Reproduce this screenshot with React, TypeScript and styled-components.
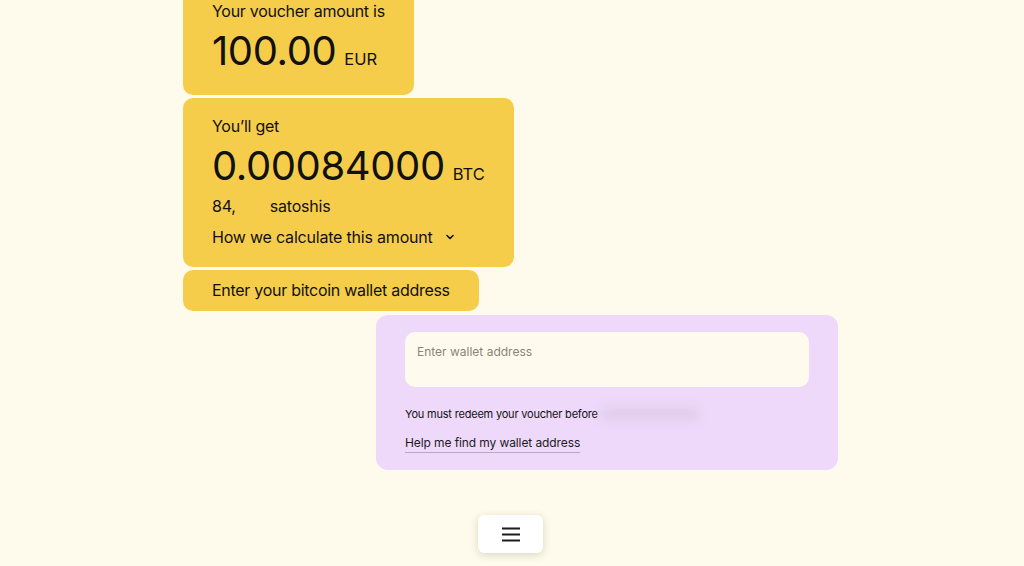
import React from "react";
import styled, { createGlobalStyle } from "styled-components";

const Global = createGlobalStyle`
  html, body {
    margin: 0;
    padding: 0;
    background: #fefbec;
    height: 100%;
    overflow: hidden;
  }
  body {
    font-family: Inter, "Noto Sans", Arial, sans-serif;
    color: #111;
  }
`;

const Page = styled.div`
  height: 566px;
  overflow: hidden;
  background: #fefbec;
`;

const Column = styled.div`
  width: 655px;
  margin-left: calc(50% - 329px);
  margin-top: -17px;
  display: flex;
  flex-direction: column;
  gap: 3px;
`;

const Bubble = styled.div<{ $pb?: number; $pt?: number }>`
  align-self: flex-start;
  background: #f6cd4b;
  border-radius: 10px;
  padding: ${(p) => p.$pt ?? 16}px 29px ${(p) => p.$pb ?? 18}px;
  display: flex;
  flex-direction: column;
`;

const Label = styled.div`
  font-size: 16px;
  line-height: 24px;
  letter-spacing: -0.28px;
`;

const AmountRow = styled.div`
  display: flex;
  align-items: baseline;
  gap: 8px;
  margin-top: 4px;
  height: 48px;
`;

const Amount = styled.span`
  font-size: 40px;
  line-height: 48px;
  letter-spacing: -0.4px;
`;

const Currency = styled.span`
  font-size: 16.5px;
  line-height: 16px;
`;

const Sub = styled.div<{ $mt?: number }>`
  font-size: 16px;
  line-height: 24px;
  margin-top: ${(p) => p.$mt ?? 0}px;
  letter-spacing: -0.2px;
  display: flex;
  align-items: center;
`;

const Hidden = styled.span`
  display: inline-block;
  width: 34px;
`;

const Chevron = styled.svg`
  margin-left: 11px;
  width: 12px;
  height: 12px;
`;

const Panel = styled.div`
  align-self: flex-end;
  margin-top: 1px;
  width: 462px;
  box-sizing: border-box;
  background: #eed9fb;
  border-radius: 12px;
  padding: 17px 29px 17px;
  display: flex;
  flex-direction: column;
`;

const Input = styled.div`
  height: 55px;
  background: #fefbee;
  border-radius: 10px;
  padding: 12px 12px 0;
  box-sizing: border-box;
  font-size: 12px;
  line-height: 16px;
  color: #8a8677;
`;

const Note = styled.div`
  margin-top: 19px;
  font-size: 11px;
  line-height: 16px;
  color: #111;
  display: flex;
  align-items: center;
  letter-spacing: -0.2px;
`;

const Blur = styled.span`
  display: inline-block;
  margin-left: 3px;
  width: 98px;
  height: 14px;
  background: rgba(215, 198, 222, 0.55);
  filter: blur(5px);
`;

const HelpLink = styled.a`
  align-self: flex-start;
  margin-top: 12px;
  font-size: 12px;
  line-height: 18px;
  letter-spacing: -0.1px;
  color: #1d1a22;
  text-decoration: none;
  border-bottom: 1px solid #b9a9c3;
`;

const Footer = styled.div`
  display: flex;
  justify-content: center;
  margin-top: 42px;
`;

const MenuButton = styled.button`
  width: 65px;
  height: 38px;
  border: none;
  background: #ffffff;
  border-radius: 6px;
  box-shadow: 0 2px 8px rgba(60, 50, 20, 0.18);
  display: flex;
  align-items: center;
  justify-content: center;
  padding: 0;
`;

export default function App() {
  return (
    <Page>
      <Global />
      <Column>
        <Bubble $pb={20}>
          <Label>Your voucher amount is</Label>
          <AmountRow>
            <Amount>100.00</Amount>
            <Currency>EUR</Currency>
          </AmountRow>
        </Bubble>
        <Bubble>
          <Label>You’ll get</Label>
          <AmountRow>
            <Amount>0.00084000</Amount>
            <Currency>BTC</Currency>
          </AmountRow>
          <Sub $mt={4}>
            84,<Hidden />
            satoshis
          </Sub>
          <Sub $mt={7}>
            How we calculate this amount
            <Chevron viewBox="0 0 12 12" fill="none">
              <polyline
                points="3,4.5 6,7.5 9,4.5"
                stroke="#111"
                strokeWidth="1.6"
                strokeLinecap="round"
                strokeLinejoin="round"
              />
            </Chevron>
          </Sub>
        </Bubble>
        <Bubble $pt={8} $pb={9}>
          <Label>Enter your bitcoin wallet address</Label>
        </Bubble>
        <Panel>
          <Input>Enter wallet address</Input>
          <Note>
            You must redeem your voucher before
            <Blur />
          </Note>
          <HelpLink href="#">Help me find my wallet address</HelpLink>
        </Panel>
        <Footer>
          <MenuButton aria-label="Menu">
            <svg width="20" height="16" viewBox="0 0 20 16">
              <rect x="1" y="1.5" width="18" height="2" fill="#1c1c1c" />
              <rect x="1" y="7.5" width="18" height="2" fill="#1c1c1c" />
              <rect x="1" y="13.5" width="18" height="2" fill="#1c1c1c" />
            </svg>
          </MenuButton>
        </Footer>
      </Column>
    </Page>
  );
}
